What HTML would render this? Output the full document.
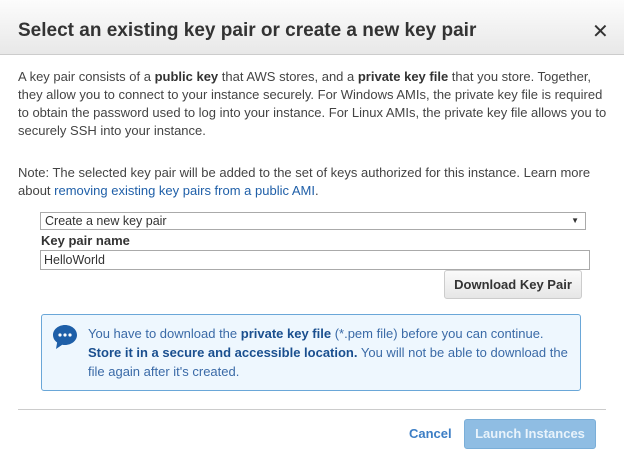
<!DOCTYPE html>
<html><head><style>
*{margin:0;padding:0;box-sizing:border-box}
body{width:624px;height:462px;background:#fff;font-family:"Liberation Sans",Arial,sans-serif;color:#444;font-size:13px;position:relative;overflow:hidden}
.hdr{position:absolute;left:0;top:0;width:624px;height:55px;background:linear-gradient(#fcfcfc,#e8e8e8);border-bottom:1px solid #ccc}
.hdr h1{position:absolute;left:18px;top:20px;font-size:19px;font-weight:bold;color:#333}
.x{position:absolute;left:592px;top:19px;font-size:20px;color:#333}
.p{position:absolute;left:18px;line-height:18px;width:592px}
b{color:#333}
a{color:#1f5fa8;text-decoration:none}
.sel{position:absolute;left:40px;top:212px;width:546px;height:18px;border:1px solid #aaa;font-size:12.5px;padding-left:4px;line-height:16px;color:#333}
.sel span{position:absolute;right:6px;top:0;font-size:8px}
.lbl{position:absolute;left:41px;top:233px;font-weight:bold;color:#333}
.inp{position:absolute;left:40px;top:250px;width:550px;height:20px;border:1px solid #aaa;font-size:12.5px;padding-left:3px;line-height:18px;color:#333}
.btn{position:absolute;left:444px;top:270px;width:138px;height:29px;border:1px solid #ccc;border-radius:3px;background:linear-gradient(#fafafa,#e6e6e6);font-weight:bold;color:#333;text-align:center;line-height:27px}
.info{position:absolute;left:41px;top:314px;width:540px;height:77px;border:1px solid #6aa7d8;border-radius:3px;background:#eef7fe;color:#3a6aa7}
.info .t{position:absolute;left:46px;top:9px;line-height:19px;width:490px}
.info b{color:#1a4f8f}
.sep{position:absolute;left:18px;top:409px;width:588px;border-top:1px solid #ccc}
.cancel{position:absolute;left:409px;top:426px;font-weight:bold;color:#3c7ec5}
.launch{position:absolute;left:464px;top:419px;width:132px;height:30px;border-radius:3px;background:#8fbde3;border:1px solid #7aaed8;color:#e9f3fb;font-weight:bold;text-align:center;line-height:28px}
</style></head><body>
<div class="hdr"><h1>Select an existing key pair or create a new key pair</h1><div class="x">✕</div></div>
<div class="p" style="top:68px">A key pair consists of a <b>public key</b> that AWS stores, and a <b>private key file</b> that you store. Together, they allow you to connect to your instance securely. For Windows AMIs, the private key file is required to obtain the password used to log into your instance. For Linux AMIs, the private key file allows you to securely SSH into your instance.</div>
<div class="p" style="top:164px">Note: The selected key pair will be added to the set of keys authorized for this instance. Learn more about <a>removing existing key pairs from a public AMI</a>.</div>
<div class="sel">Create a new key pair<span>▼</span></div>
<div class="lbl">Key pair name</div>
<div class="inp">HelloWorld</div>
<div class="btn">Download Key Pair</div>
<div class="info">
<svg style="position:absolute;left:10px;top:9px" width="26" height="26" viewBox="0 0 26 26"><path d="M13 1C6.4 1 1 5.5 1 11c0 3 1.6 5.7 4.1 7.5L4 25l6.2-4.3c.9.2 1.8.3 2.8.3 6.6 0 12-4.5 12-10S19.6 1 13 1z" fill="#1e5fa8"/><circle cx="8" cy="11" r="1.6" fill="#fff"/><circle cx="13" cy="11" r="1.6" fill="#fff"/><circle cx="18" cy="11" r="1.6" fill="#fff"/></svg>
<div class="t">You have to download the <b>private key file</b> (*.pem file) before you can continue. <b>Store it in a secure and accessible location.</b> You will not be able to download the file again after it's created.</div></div>
<div class="sep"></div>
<div class="cancel">Cancel</div>
<div class="launch">Launch Instances</div>
</body></html>
